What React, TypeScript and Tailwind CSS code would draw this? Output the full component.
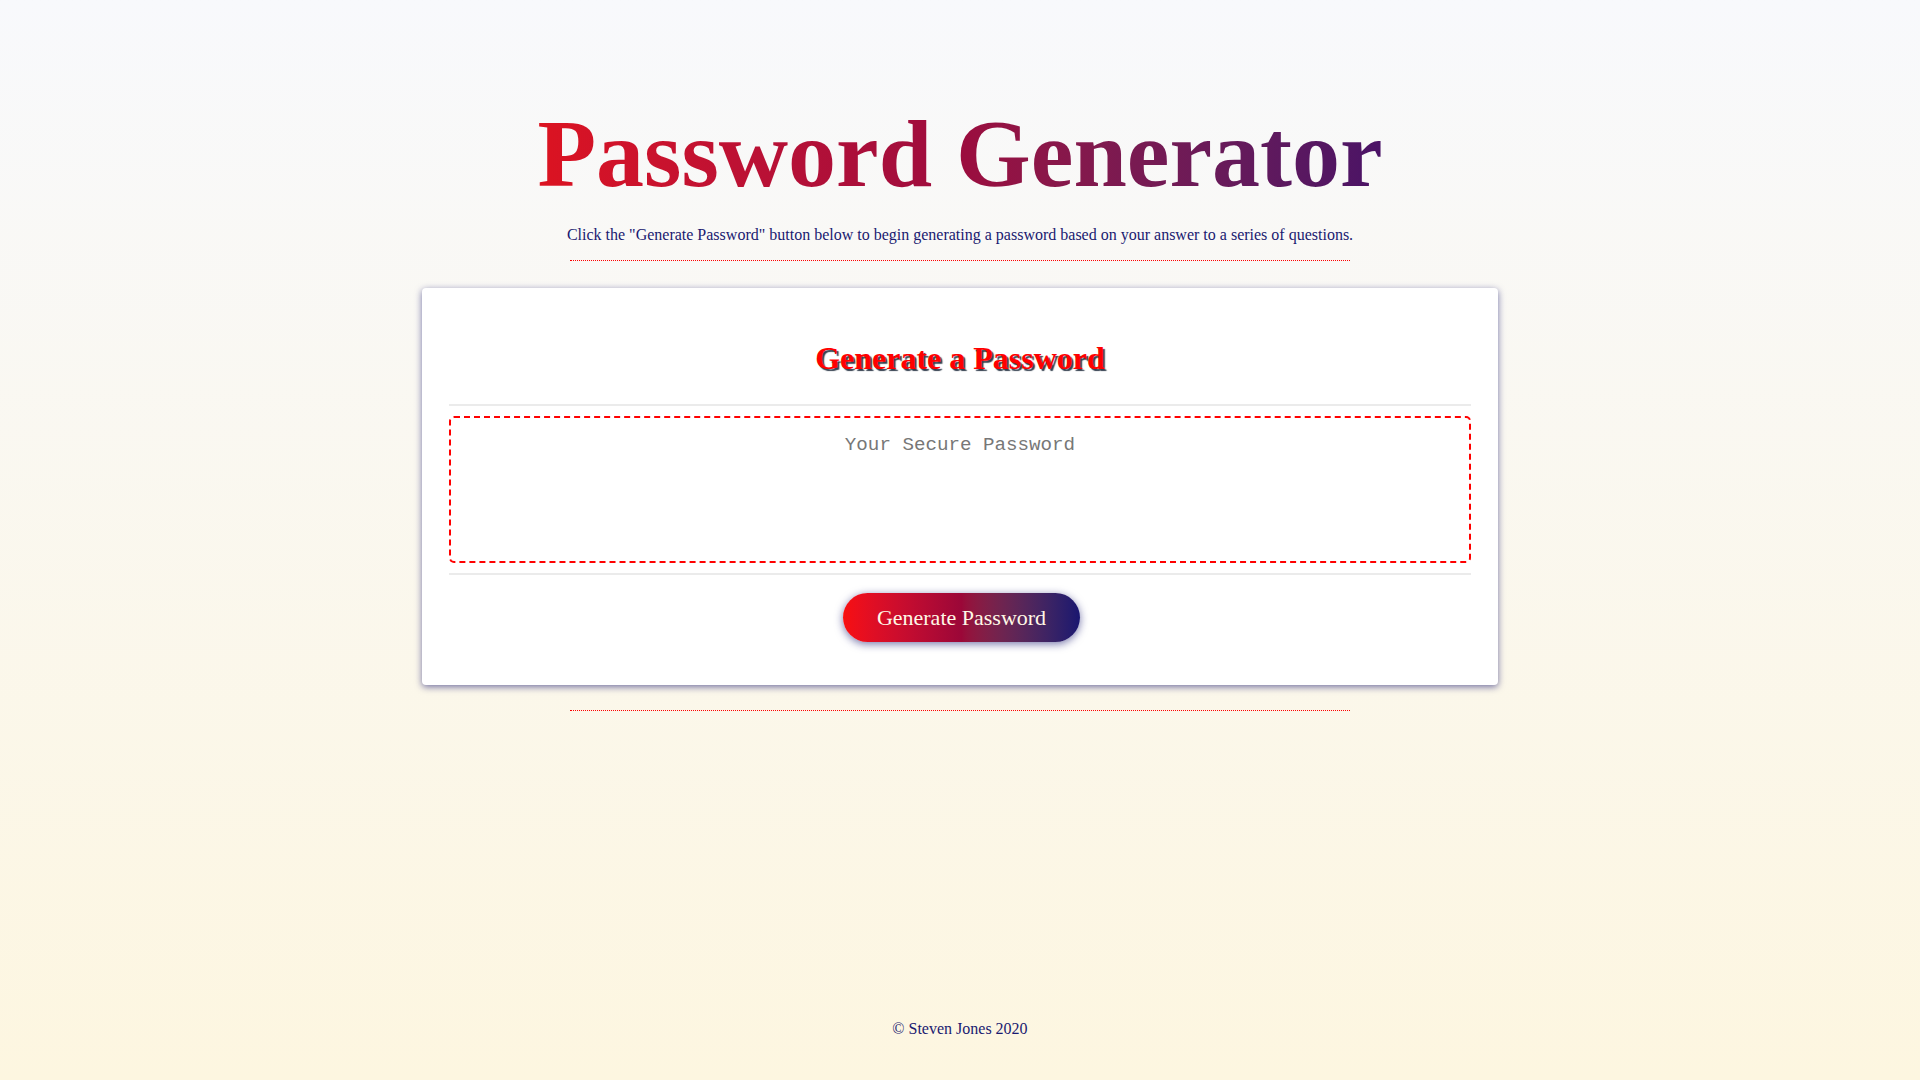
import React from "react";

export default function App() {
  return (
    <div className="min-h-screen w-full flex flex-col items-center bg-gradient-to-b from-[#f8f9fc] to-[#fdf6e0] font-['Liberation_Serif',serif] text-[#191970]">
      <header className="flex flex-col items-center pt-[99px]">
        <h1 className="text-[96px] leading-[110px] font-bold bg-gradient-to-r from-[#dc1320] via-[#9c0c3e] to-[#4a1266] bg-clip-text text-transparent">
          Password Generator
        </h1>
        <p className="mt-[17px] text-[16px] leading-[18px] text-[#191970]">
          Click the "Generate Password" button below to begin generating a password based on your answer to a series of questions.
        </p>
        <div className="mt-[16px] w-[780px] border-t border-dotted border-[#ff0000]" />
      </header>

      <main className="mt-[27px] w-[1076px] rounded-[4px] bg-white px-[27px] pt-[52px] pb-[43px] shadow-[0_2px_7px_rgba(25,25,112,0.6)]">
        <h2 className="text-center text-[32px] leading-[37px] font-bold text-[#ff0000] [text-shadow:2px_2px_1px_#34404f]">
          Generate a Password
        </h2>
        <div className="mt-[27px] h-[2px] bg-[#ebebeb]" />
        <textarea
          readOnly
          placeholder="Your Secure Password"
          className="mt-[10px] block w-full h-[147px] resize-none rounded-[5px] border-2 border-dashed border-[#ff0000] bg-white pt-[16px] text-center text-[19.2px] leading-[22px] font-['Liberation_Mono',monospace] text-[#333] placeholder:text-[#777] outline-none"
        />
        <div className="mt-[10px] h-[2px] bg-[#ebebeb]" />
        <div className="mt-[18px] flex justify-center">
          <button className="ml-[3px] h-[49px] rounded-full px-[34px] bg-gradient-to-r from-[#f80f0f] via-[#9b0738] to-[#1a1670] text-[22px] leading-[24px] text-[#fff8e6] shadow-[0_2px_8px_rgba(25,25,112,0.6)]">
            Generate Password
          </button>
        </div>
      </main>

      <div className="mt-[25px] w-[780px] border-t border-dotted border-[#ff0000]" />

      <footer className="mt-auto pb-[42px] text-[16px] leading-[18px] text-[#191970]">
        © Steven Jones 2020
      </footer>
    </div>
  );
}
